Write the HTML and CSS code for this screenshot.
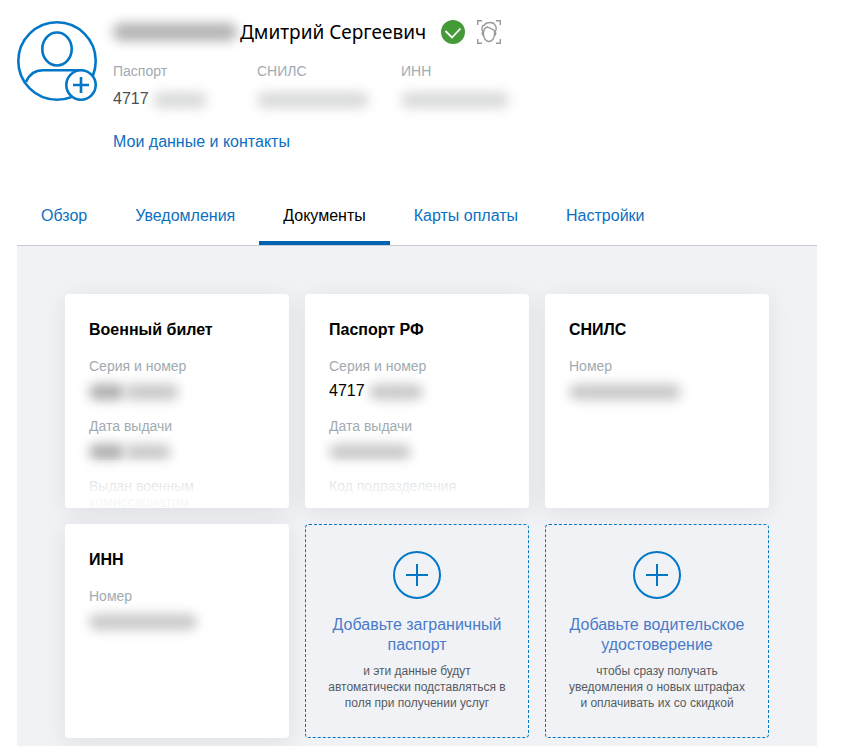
FILE: index.html
```html
<!DOCTYPE html>
<html lang="ru">
<head>
    <meta charset="UTF-8">
    <meta name="viewport" content="width=device-width, initial-scale=1.0">
    <title>Личный кабинет - Документы</title>
    <link rel="stylesheet" href="styles.css">
</head>
<body>
    <header class="profile">
        <button class="avatar" type="button" aria-label="Добавить фото">
            <svg width="80" height="80" viewBox="0 0 80 80" fill="none" stroke="#0277c8" stroke-width="2.6">
                <circle cx="40" cy="40" r="38.7"/>
                <ellipse cx="40" cy="28" rx="14.7" ry="16.5"/>
                <path d="M9 61c3-7 8-11.700 17-11.700h38"/>
                <circle cx="64" cy="64" r="14.700" fill="#fff"/>
                <path d="M56 64h16M64 56v16"/>
            </svg>
        </button>
        <div class="profile-info">
            <div class="profile-name">
                <span class="hidden-data surname"></span>
                <h1>Дмитрий Сергеевич</h1>
                <svg class="icon-verified" width="24" height="24" viewBox="0 0 24 24" fill="none">
                    <circle cx="12" cy="12" r="12" fill="#459a38"/>
                    <path d="M4.500 11l6.500 6.500 8.500-9" stroke="#fff" stroke-width="1.800"/>
                </svg>
                <svg class="icon-face" width="24" height="24" viewBox="0 0 24 24" fill="none" stroke="#999" stroke-width="1.400">
                    <path d="M0.700 5V0.700H5M19 0.700h4.300V5M23.300 19v4.300H19M5 23.300H0.700V19"/>
                    <path d="M6.300 12.500C4 9.500 4.500 5.500 7.500 5 9 2 16.500 1.300 18.300 5.500c1.500 2 .700 5-.600 7"/>
                    <path d="M6.800 11.500c.2-2.500 1.700-4 3.700-4.500 2.500 1.800 5.500 1 7 4"/>
                    <path d="M6.500 11v3.500c0 4 2.800 7 5.500 7s5.500-3 5.500-7V11"/>
                    <path d="M6.500 12c-2 0-1.500 3.500.3 3.500M17.500 12c2 0 1.500 3.500-.3 3.500"/>
                </svg>
            </div>
            <dl class="profile-data">
                <div>
                    <dt>Паспорт</dt>
                    <dd>4717 <span class="hidden-data light w-54"></span></dd>
                </div>
                <div>
                    <dt>СНИЛС</dt>
                    <dd><span class="hidden-data light w-112"></span></dd>
                </div>
                <div>
                    <dt>ИНН</dt>
                    <dd><span class="hidden-data light w-108"></span></dd>
                </div>
            </dl>
            <a href="#contacts" class="contacts-link">Мои данные и контакты</a>
        </div>
    </header>
    <nav>
        <a href="#overview">Обзор</a>
        <a href="#notifications">Уведомления</a>
        <a href="#documents" class="active">Документы</a>
        <a href="#cards">Карты оплаты</a>
        <a href="#settings">Настройки</a>
    </nav>
    <main class="documents">
        <section class="card fade">
            <h2>Военный билет</h2>
            <dl>
                <dt>Серия и номер</dt>
                <dd><span class="hidden-data dark w-36"></span><span class="hidden-data w-54"></span></dd>
                <dt>Дата выдачи</dt>
                <dd><span class="hidden-data dark w-36"></span><span class="hidden-data w-46"></span></dd>
                <dt>Выдан военным комиссариатом</dt>
            </dl>
        </section>
        <section class="card fade">
            <h2>Паспорт РФ</h2>
            <dl>
                <dt>Серия и номер</dt>
                <dd>4717 <span class="hidden-data w-54"></span></dd>
                <dt>Дата выдачи</dt>
                <dd><span class="hidden-data w-82"></span></dd>
                <dt>Код подразделения</dt>
            </dl>
        </section>
        <section class="card">
            <h2>СНИЛС</h2>
            <dl>
                <dt>Номер</dt>
                <dd><span class="hidden-data w-112"></span></dd>
            </dl>
        </section>
        <section class="card">
            <h2>ИНН</h2>
            <dl>
                <dt>Номер</dt>
                <dd><span class="hidden-data w-108"></span></dd>
            </dl>
        </section>
        <a href="#add-passport" class="add-card">
            <svg width="48" height="48" viewBox="0 0 48 48" fill="none" stroke="#0277c8" stroke-width="2">
                <circle cx="24" cy="24" r="23"/>
                <path d="M13 24h22M24 13v22"/>
            </svg>
            <span class="add-title">Добавьте заграничный паспорт</span>
            <span class="add-text">и эти данные будут автоматически подставляться в поля при получении услуг</span>
        </a>
        <a href="#add-license" class="add-card">
            <svg width="48" height="48" viewBox="0 0 48 48" fill="none" stroke="#0277c8" stroke-width="2">
                <circle cx="24" cy="24" r="23"/>
                <path d="M13 24h22M24 13v22"/>
            </svg>
            <span class="add-title">Добавьте водительское удостоверение</span>
            <span class="add-text">чтобы сразу получать уведомления о новых штрафах и оплачивать их со скидкой</span>
        </a>
    </main>
</body>
</html>
```
FILE: styles.css
```css
* {
    box-sizing: border-box;
}
body {
    margin: 0;
    padding: 20px 26px 0 17px;
    font-family: "Liberation Sans", Arial, sans-serif;
    font-size: 16px;
    line-height: 24px;
    color: #000;
    background-color: #fff;
}
h1, h2, dl, dt, dd {
    margin: 0;
}
a {
    color: #0b70c0;
    text-decoration: none;
}
a:hover {
    text-decoration: underline;
}
.profile {
    display: flex;
    gap: 16px;
}
.avatar {
    width: 80px;
    height: 80px;
    margin-top: 1px;
    padding: 0;
    border: none;
    background: none;
    cursor: pointer;
}
.avatar svg {
    display: block;
}
.profile-name {
    display: flex;
    align-items: center;
    height: 24px;
}
.profile-name h1 {
    font-family: "Noto Sans", "Open Sans", sans-serif;
    font-size: 19px;
    font-weight: normal;
    line-height: 24px;
}
.icon-verified {
    margin-left: 15px;
}
.icon-face {
    margin-left: 12px;
}
.profile-data {
    display: grid;
    grid-template-columns: repeat(3, 144px);
    margin-top: 19px;
}
.profile-data dd {
    margin-top: 8px;
    color: #4a4f54;
}
dt {
    font-size: 14px;
    line-height: 16px;
    color: #a1abb1;
}
.contacts-link {
    display: inline-block;
    margin-top: 21px;
    line-height: 20px;
}
nav {
    display: flex;
    margin-top: 52px;
    border-bottom: 1px solid #c5cbd0;
}
nav a {
    padding: 0 24px 15px;
    line-height: 20px;
    border-bottom: 4px solid transparent;
}
nav a.active {
    color: #000;
    border-bottom-color: #0063b0;
}
.documents {
    display: grid;
    grid-template-columns: repeat(3, 1fr);
    grid-auto-rows: 214px;
    gap: 16px;
    padding: 48px 48px 8px;
    background-color: #f1f2f6;
}
.card {
    position: relative;
    padding: 24px;
    overflow: hidden;
    background-color: #fff;
    border-radius: 4px;
    box-shadow: 0 4px 24px rgba(0, 0, 0, 0.08);
}
.card h2 {
    font-size: 16px;
    line-height: 24px;
}
.card dt {
    margin-top: 15px;
}
.card h2 + dl dt:first-child {
    margin-top: 16px;
}
.card dd {
    margin-top: 5px;
}
/* long documents fade out at the bottom of the card */
.fade::after {
    content: "";
    position: absolute;
    left: 0;
    right: 0;
    bottom: 0;
    height: 48px;
    background: linear-gradient(rgba(255, 255, 255, 0.2), rgba(255, 255, 255, 0.9) 70%);
}
/* personal data is masked */
.hidden-data {
    display: inline-block;
    height: 16px;
    vertical-align: middle;
    background-color: #c8c8c8;
    border-radius: 8px;
    filter: blur(6px);
}
.hidden-data.light {
    background-color: #d8d9d9;
}
.hidden-data.dark {
    background-color: #adadad;
}
.surname {
    width: 124px;
    height: 18px;
    margin-right: 3px;
    background-color: #b4b3b3;
}
.w-36 {
    width: 36px;
}
.w-46 {
    width: 46px;
}
.w-54 {
    width: 54px;
}
.w-82 {
    width: 82px;
}
.w-108 {
    width: 108px;
}
.w-112 {
    width: 112px;
}
.add-card {
    display: flex;
    flex-direction: column;
    align-items: center;
    padding: 26px 20px 0;
    text-align: center;
    border: 1px dashed #0277c8;
    border-radius: 4px;
    background-color: #f1f2f6;
    z-index: 1;
}
.add-card svg {
    flex-shrink: 0;
}
.add-title {
    margin-top: 16px;
    line-height: 20px;
    color: #4a7bc8;
}
.add-text {
    margin-top: 8px;
    font-size: 12px;
    line-height: 16px;
    color: #555b61;
}
```
